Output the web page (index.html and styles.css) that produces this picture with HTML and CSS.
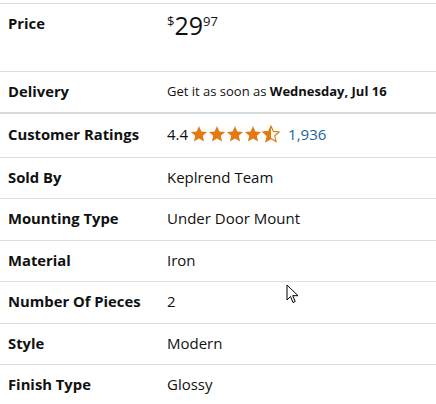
FILE: index.html
```html
<!DOCTYPE html>
<html>
<head>
<meta charset="utf-8">
<link rel="stylesheet" href="styles.css">
</head>
<body>
<div class="specs">
  <div class="row row-price">
    <div class="label">Price</div>
    <div class="value price"><span class="sup">$</span><span class="whole">29</span><span class="sup">97</span></div>
  </div>
  <div class="row row-delivery">
    <div class="label">Delivery</div>
    <div class="value delivery">Get it as soon as <b>Wednesday, Jul 16</b></div>
  </div>
  <div class="row row-thick">
    <div class="label">Customer Ratings</div>
    <div class="value rating">
      <span class="score">4.4</span>
      <span class="stars">
        <svg viewBox="0 0 20 20" class="star"><path d="M10 1.2l2.6 5.9 6.4.6-4.8 4.3 1.4 6.3L10 15l-5.6 3.3 1.4-6.3L1 7.7l6.4-.6z" fill="#e47911"/></svg>
        <svg viewBox="0 0 20 20" class="star"><path d="M10 1.2l2.6 5.9 6.4.6-4.8 4.3 1.4 6.3L10 15l-5.6 3.3 1.4-6.3L1 7.7l6.4-.6z" fill="#e47911"/></svg>
        <svg viewBox="0 0 20 20" class="star"><path d="M10 1.2l2.6 5.9 6.4.6-4.8 4.3 1.4 6.3L10 15l-5.6 3.3 1.4-6.3L1 7.7l6.4-.6z" fill="#e47911"/></svg>
        <svg viewBox="0 0 20 20" class="star"><path d="M10 1.2l2.6 5.9 6.4.6-4.8 4.3 1.4 6.3L10 15l-5.6 3.3 1.4-6.3L1 7.7l6.4-.6z" fill="#e47911"/></svg>
        <svg viewBox="0 0 20 20" class="star"><path d="M10 1.2l2.6 5.9 6.4.6-4.8 4.3 1.4 6.3L10 15l-5.6 3.3 1.4-6.3L1 7.7l6.4-.6z" fill="none" stroke="#e47911" stroke-width="1.3"/><path d="M10 1.2V15l-5.6 3.3 1.4-6.3L1 7.7l6.4-.6z" fill="#e47911"/></svg>
      </span>
      <span class="count">1,936</span>
    </div>
  </div>
  <div class="row">
    <div class="label">Sold By</div>
    <div class="value">Keplrend Team</div>
  </div>
  <div class="row row-tall">
    <div class="label">Mounting Type</div>
    <div class="value">Under Door Mount</div>
  </div>
  <div class="row">
    <div class="label">Material</div>
    <div class="value">Iron</div>
  </div>
  <div class="row row-tall">
    <div class="label">Number Of Pieces</div>
    <div class="value">2</div>
  </div>
  <div class="row">
    <div class="label">Style</div>
    <div class="value">Modern</div>
  </div>
  <div class="row">
    <div class="label">Finish Type</div>
    <div class="value">Glossy</div>
  </div>
</div>
<svg class="cursor" width="14" height="20" viewBox="0 0 14 20"><path d="M1 1v15l3.5-3.5 2.5 6 2.2-1-2.5-5.8H12z" fill="#fff" stroke="#000" stroke-width="1"/></svg>
</body>
</html>
```
FILE: styles.css
```css
html, body {
  margin: 0;
  padding: 0;
  background: #fff;
}
body {
  font-family: "Open Sans", "Noto Sans", sans-serif;
  color: #0f1111;
  padding-top: 3px;
  position: relative;
  width: 436px;
  height: 404px;
  overflow: hidden;
}
.row {
  display: grid;
  grid-template-columns: 159px 1fr;
  align-items: center;
  padding: 0 8px 3px;
  border-top: 1px solid #dddddd;
  height: 41px;
  box-sizing: border-box;
  font-size: 15px;
}
.row-tall {
  height: 42px;
}
.row-price {
  height: 68px;
  align-items: start;
  padding-top: 9px;
}
.row-delivery {
  height: 41px;
  padding-bottom: 2px;
}
.row-thick {
  border-top: 2px solid #d5dbdb;
  height: 45px;
}
.label {
  font-weight: 700;
  font-size: 14.8px;
}
.price {
  display: flex;
  align-items: flex-start;
  line-height: 1;
}
.price .sup {
  font-size: 13px;
  margin-top: 2px;
}
.price .whole {
  font-size: 25px;
}
.delivery {
  font-size: 13px;
}
.rating {
  display: flex;
  align-items: center;
}
.stars {
  display: flex;
  margin-left: 2px;
}
.star {
  width: 18px;
  height: 18px;
}
.count {
  color: #2162a1;
  margin-left: 8px;
}
.cursor {
  position: absolute;
  left: 286px;
  top: 284px;
}
```
